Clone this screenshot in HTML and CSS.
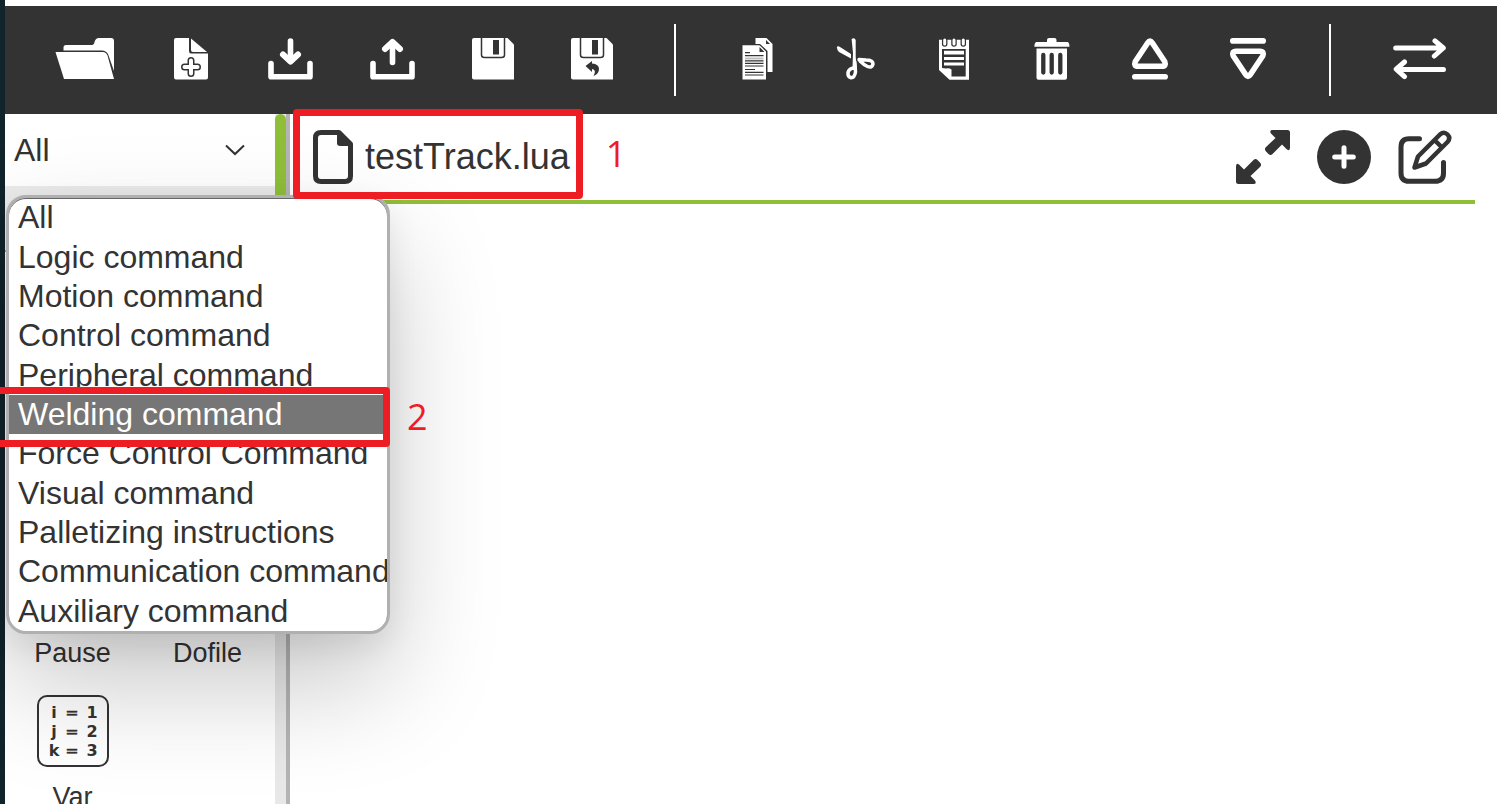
FILE: index.html
```html
<!DOCTYPE html>
<html lang="en">
<head>
<meta charset="utf-8">
<title>testTrack.lua</title>
<link rel="stylesheet" href="styles.css">
</head>
<body>
<div class="app">
  <header class="toolbar">
    <div class="tool-group files">
      <button class="tool" type="button" aria-label="Open"><svg width="60" height="42" viewBox="0 0 60 42"><path d="M9.500 12.500V9.500Q9.500 7 12 7H38Q40 7 40.500 4Q41.500 0 45 0H57Q60 0 60 3V33L54 16Q52 12.500 48 12.500Z"/><path d="M1.500 14H49Q52 14 53.500 17.500L60 41H10Z"/></svg></button>
      <button class="tool" type="button" aria-label="New"><svg width="40" height="42" viewBox="0 0 40 42"><path d="M5 0H18V13Q18 15.500 20 15.500H37V39.500Q37 41.500 35 41.500H5Q3 41.500 3 39.500V2Q3 0 5 0Z"/><path d="M20 .5L36 14H22Q20 14 20 12Z"/><path class="dark-line" stroke-width="7" d="M13.500 29H26.500M20 22.500V35.500"/><path class="line" stroke-width="4" d="M13.500 29H26.500M20 22.500V35.500"/></svg></button>
      <button class="tool" type="button" aria-label="Import"><svg width="45" height="42" viewBox="0 0 45 42"><path class="line" stroke-width="5.600" d="M3 25.500V38.700H42V25.500M22.500 3V23"/><path class="line" stroke-width="6" d="M15 16.500L22.500 23.500L30 16.500"/></svg></button>
      <button class="tool" type="button" aria-label="Export"><svg width="45" height="42" viewBox="0 0 45 42"><path class="line" stroke-width="5.600" d="M3 25.500V38.700H42V25.500M22.500 5V24.500"/><path class="line" stroke-width="6" d="M15 11L22.500 4L30 11"/></svg></button>
      <button class="tool" type="button" aria-label="Save"><svg width="42" height="42" viewBox="0 0 42 42"><path d="M2 0H35.500L42 6.500V41.500H2Q0 41.500 0 39.500V2Q0 0 2 0Z"/><path class="dark-line" stroke-width="1.500" d="M9.500 -2V17Q9.500 19.500 12.500 19.500H29.500Q32.500 19.500 32.500 17V-2"/><path class="dark" d="M21 2H27V16.500H21Z"/></svg></button>
      <button class="tool" type="button" aria-label="Save as"><svg width="42" height="42" viewBox="0 0 42 42"><path d="M2 0H35.500L42 6.500V41.500H2Q0 41.500 0 39.500V2Q0 0 2 0Z"/><path class="dark-line" stroke-width="1.500" d="M9.500 -2V17Q9.500 19.500 12.500 19.500H29.500Q32.500 19.500 32.500 17V-2"/><path class="dark" d="M21 2H27V16.500H21ZM14.500 28L21 23V25.500Q28 26 28 31Q28 36 22.500 38Q26 32 21 31V34Z"/></svg></button>
    </div>
    <span class="divider"></span>
    <div class="tool-group">
      <button class="tool" type="button" aria-label="Copy"><svg width="40" height="42" viewBox="0 0 40 42"><path d="M17.500 0H28.500L34.500 6V34H29.500V13L22 6H17.500Z"/><path class="dark" d="M28 2V6H32Z"/><path d="M4.500 7.300H21.500L28 13.500V41.600H4.500Z"/><path class="dark" d="M21.500 9V14H26.500ZM7 14H12V15.300H7ZM7 17H25.500V18.200H7ZM7 22.200H25.500V23.400H7ZM7 24.800H25.500V26H7ZM7 27.400H25.500V28.600H7ZM7 31H17V32H7ZM7 33.800H25.500V35H7ZM7 36.500H25.500V37.500H7Z"/><path fill="#bcc2bb" d="M7 19.500H25.500V21.500H7Z"/></svg></button>
      <button class="tool" type="button" aria-label="Cut"><svg width="40" height="42" viewBox="0 0 40 42"><path d="M.8 9Q2 7.500 4 9L15 16V20.500L3 14Q1 12 .8 9ZM15.600 1Q18.500 -1 19.700 2V19L21 32L16.500 30L17 15Z"/><path class="line" stroke-width="3.500" d="M18.800 24L19.500 34Q18.500 40 15 39.800Q11.500 39 12 34.500Q13 30.500 18 30M23 21.500L30 22Q37 22 37 26Q36 30.500 31.500 28.500Q28 27 24 23"/></svg></button>
      <button class="tool" type="button" aria-label="Paste"><svg width="40" height="42" viewBox="0 0 40 42"><path d="M5 1.700H35V41.700H15.500L5 32Z"/><path class="dark" d="M8 11H31.700V38.500H17.500V31.500Q15 29.500 12 30.500L8 30Z"/><path d="M10 12.800H30V16.500H10ZM10 19H30V22H10ZM10 24.500H30V27.500H10Z"/><path class="dark-line" stroke-width="5.500" d="M10.700 0V6M20 0V6M29.300 0V6"/><path class="line" stroke-width="3" d="M10.700 2V6M20 2V6M29.300 2V6"/></svg></button>
      <button class="tool" type="button" aria-label="Delete"><svg width="40" height="42" viewBox="0 0 40 42"><path d="M15 4V2Q15 0 17 0H22.500Q24.500 0 24.500 2V4H36Q37.500 5 37.500 8.700H2.300Q2.300 5 4 4ZM4.500 10.500H35V39.700Q35 41.700 33 41.700H6.500Q4.500 41.700 4.500 39.700Z"/><path class="dark-line" stroke-width="4.300" d="M11.300 17V34.500M19.700 17V34.500M28.300 17V34.500"/></svg></button>
      <button class="tool" type="button" aria-label="Move up"><svg width="40" height="42" viewBox="0 0 40 42"><path class="line" stroke-width="5.600" d="M17.800 4.700Q20 1.300 22.200 4.700L34.700 23.500Q36.500 28.200 32 28.200H8Q3.500 28.200 5.300 23.500ZM4.800 38.700H35.200"/></svg></button>
      <button class="tool" type="button" aria-label="Move down"><svg width="40" height="42" viewBox="0 0 40 42"><path class="line" stroke-width="5.600" d="M17.800 36.800Q20 40.200 22.200 36.800L34.700 18Q36.500 13.300 32 13.300H8Q3.500 13.300 5.300 18ZM4.800 2.900H35.200"/></svg></button>
    </div>
    <span class="divider"></span>
    <button class="tool" type="button" aria-label="Switch mode"><svg width="54" height="42" viewBox="0 0 54 42"><path class="line" stroke-width="5" d="M2.700 10H49M42 2.900L50.300 10L41.300 18M50.500 31.500H5M11.500 24L3.200 31.200L11.500 38.600"/></svg></button>
  </header>

  <div class="workspace">
    <aside class="sidebar">
      <div class="command-pane">
        <div class="filter">
          <select class="filter-select" aria-label="Command type"><option>All</option></select>
          <svg class="chevron" width="20" height="12" viewBox="0 0 20 12"><path d="M1 1.500L10 10L19 1.500"/></svg>
          <div class="popup">
            <div class="options" role="listbox" aria-label="Command types">
              <button class="option" type="button" role="option">All</button>
              <button class="option" type="button" role="option">Logic command</button>
              <button class="option" type="button" role="option">Motion command</button>
              <button class="option" type="button" role="option">Control command</button>
              <button class="option" type="button" role="option">Peripheral command</button>
              <button class="option selected" type="button" role="option" aria-selected="true">Welding command</button>
              <button class="option" type="button" role="option">Force Control Command</button>
              <button class="option" type="button" role="option">Visual command</button>
              <button class="option" type="button" role="option">Palletizing instructions</button>
              <button class="option" type="button" role="option">Communication command</button>
              <button class="option" type="button" role="option">Auxiliary command</button>
            </div>
            <div class="mark mark-option"><span class="mark-number">2</span></div>
          </div>
        </div>
        <div class="section-bar"></div>
        <div class="commands">
          <button class="command" type="button"><span class="command-icon"></span>Pause</button>
          <button class="command" type="button"><span class="command-icon"></span>Dofile</button>
          <button class="command" type="button">
            <svg class="command-icon" viewBox="0 0 72 72"><rect x="1" y="1" width="70" height="70" rx="9" fill="none" stroke="#333" stroke-width="2"/><g class="var-text"><text x="17" y="23">i</text><text x="35" y="23" class="equals">=</text><text x="55" y="23">1</text><text x="17" y="42">j</text><text x="35" y="42" class="equals">=</text><text x="55" y="42">2</text><text x="17" y="61">k</text><text x="35" y="61" class="equals">=</text><text x="55" y="61">3</text></g></svg>
            Var
          </button>
        </div>
      </div>
      <div class="scroll-track"><div class="scroll-thumb"></div></div>
    </aside>

    <main class="editor">
      <div class="editor-head">
        <div class="file-tab">
          <svg width="40" height="54" viewBox="0 0 40 54"><path class="ink-line" stroke-width="5" d="M8 2.500H26L37.500 14V46Q37.500 51.500 32 51.500H8Q2.500 51.500 2.500 46V8Q2.500 2.500 8 2.500Z"/><path d="M24 2V13Q24 16 27 16H38V13L27 2Z"/></svg>
          <span>testTrack.lua</span>
          <div class="mark mark-file"><span class="mark-number">1</span></div>
        </div>
        <div class="editor-tools">
          <button class="tool" type="button" aria-label="Expand"><svg width="54" height="54" viewBox="0 0 54 54"><path d="M36.500 0H51.500Q54 0 54 2.500V17.500Q54 21.500 51 19.500L46 14.500L36.500 24Q34.500 26 32.500 24L29.800 21.200Q28 19 30 17L39.500 8L35 3.500Q33 0 36.500 0Z"/><path transform="rotate(180 27 27)" d="M36.500 0H51.500Q54 0 54 2.500V17.500Q54 21.500 51 19.500L46 14.500L36.500 24Q34.500 26 32.500 24L29.800 21.200Q28 19 30 17L39.500 8L35 3.500Q33 0 36.500 0Z"/></svg></button>
          <button class="tool" type="button" aria-label="Add"><svg width="54" height="54" viewBox="0 0 54 54"><circle cx="27" cy="27" r="27"/><path class="line" stroke-width="5" d="M17.700 27H36.300M27 17.700V36.300"/></svg></button>
          <button class="tool" type="button" aria-label="Edit"><svg width="54" height="54" viewBox="0 0 54 54"><path class="ink-line" stroke-width="5" d="M21.500 8.800H11Q3 8.800 3 17V43Q3 51.300 11 51.300H37Q45.500 51.300 45.500 43V32.500"/><path class="ink-line" stroke-width="4.500" d="M16.500 37.500L20 26.500L42 4.500Q46 1 49.500 4.500Q53 8 49.500 12L28 33.500ZM36.500 10L44 17.500"/></svg></button>
        </div>
      </div>
    </main>
  </div>
</div>
</body>
</html>
```
FILE: styles.css
```css
* { box-sizing: border-box; }

body {
  margin: 0;
  color: #333;
  background: #fff;
  font-family: "Liberation Sans", Arial, sans-serif;
}

button, select {
  margin: 0;
  padding: 0;
  border: 0;
  background: none;
  color: inherit;
  font: inherit;
}

svg { display: block; flex: none; }

.app {
  display: flex;
  flex-direction: column;
  height: 100vh;
  padding: 6px 0 0 5px;
  background: linear-gradient(to right, #11242c 5px, #fff 5px);
  overflow: hidden;
}

.toolbar {
  display: flex;
  align-items: center;
  flex: none;
  height: 108px;
  padding: 0 49px;
  background: #333;
}

.toolbar svg { fill: #fff; }
.toolbar .tool { padding-bottom: 2px; }
.tool-group { display: flex; gap: 58px; }
.tool-group.files { gap: 57px; }

.divider {
  flex: none;
  width: 2px;
  height: 72px;
  margin: 0 62px 0 61px;
  background: #fff;
}

.line { fill: none; stroke: #fff; stroke-linecap: round; stroke-linejoin: round; }
.dark { fill: #333; }
.dark-line { fill: none; stroke: #333; stroke-linecap: round; stroke-linejoin: round; }
.ink-line { fill: none; stroke: #333; stroke-linecap: round; stroke-linejoin: round; }

.workspace { display: flex; flex: 1; min-height: 0; }

.sidebar {
  display: flex;
  flex: none;
  border-right: 4px solid #b5b3b5;
}

.command-pane { width: 270px; }

.filter {
  position: relative;
  display: flex;
  align-items: center;
  height: 72px;
}

.filter-select {
  flex: 1;
  height: 72px;
  padding-left: 9px;
  appearance: none;
  font-size: 32px;
}

.chevron {
  position: absolute;
  right: 30px;
  fill: none;
  stroke: #333;
  stroke-width: 2;
  pointer-events: none;
}

.popup {
  position: absolute;
  z-index: 2;
  top: 81px;
  left: 1px;
  width: 384px;
  border: 3px solid #b0b0b0;
  border-radius: 20px;
  background: #fff;
  box-shadow: 0 50px 110px rgba(0, 0, 0, .22), 0 12px 30px rgba(0, 0, 0, .08);
}

.options {
  display: grid;
  grid-auto-rows: 1fr;
  height: 433px;
  overflow: hidden;
  border-radius: 17px;
  box-shadow: inset 0 1px #666;
}

.option {
  padding: 0 0 1px 9px;
  font-size: 32px;
  line-height: 38px;
  text-align: left;
  white-space: nowrap;
}

.option.selected { background: #767676; color: #fff; }

.section-bar {
  height: 66px;
  border-bottom: 2px solid #8fbf39;
  background: #ebebeb;
}

.commands {
  display: grid;
  grid-template-columns: 1fr 1fr;
  grid-auto-rows: 144px;
  padding-top: 299px;
}

.command {
  display: flex;
  flex-direction: column;
  align-items: center;
  gap: 15px;
  font-size: 27px;
  line-height: 30px;
}

.command-icon { flex: none; width: 72px; height: 72px; }

.var-text {
  fill: #333;
  font: bold 16px "DejaVu Sans", sans-serif;
  text-anchor: middle;
}

.equals { font-weight: normal; stroke: #333; stroke-width: .4px; }

.scroll-track { width: 11px; background: #e8e8e8; }
.scroll-thumb { height: 140px; border-radius: 6px; background: #8fbf39; }

.editor { flex: 1; padding-right: 22px; }

.editor-head {
  display: flex;
  align-items: center;
  justify-content: space-between;
  height: 90px;
  padding: 0 23px;
  border-bottom: 4px solid #8fbf39;
}

.editor-head svg { fill: #333; }

.file-tab {
  position: relative;
  display: flex;
  align-items: center;
  gap: 12px;
  font-size: 36px;
}

.editor-tools { display: flex; gap: 27px; }

.mark {
  position: absolute;
  z-index: 3;
  border: 7px solid #ee1c23;
  border-radius: 4px;
  pointer-events: none;
}

.mark-file { inset: -21px -13px -15px -20px; }
.mark-option { top: 189px; right: -3px; left: -20px; height: 60px; }

.mark-number {
  position: absolute;
  top: 50%;
  left: 100%;
  margin-left: 30px;
  color: #ee1c23;
  font: 36px/40px "Open Sans", sans-serif;
  transform: translateY(-50%);
}

.mark-option .mark-number { margin-left: 24px; }
```
